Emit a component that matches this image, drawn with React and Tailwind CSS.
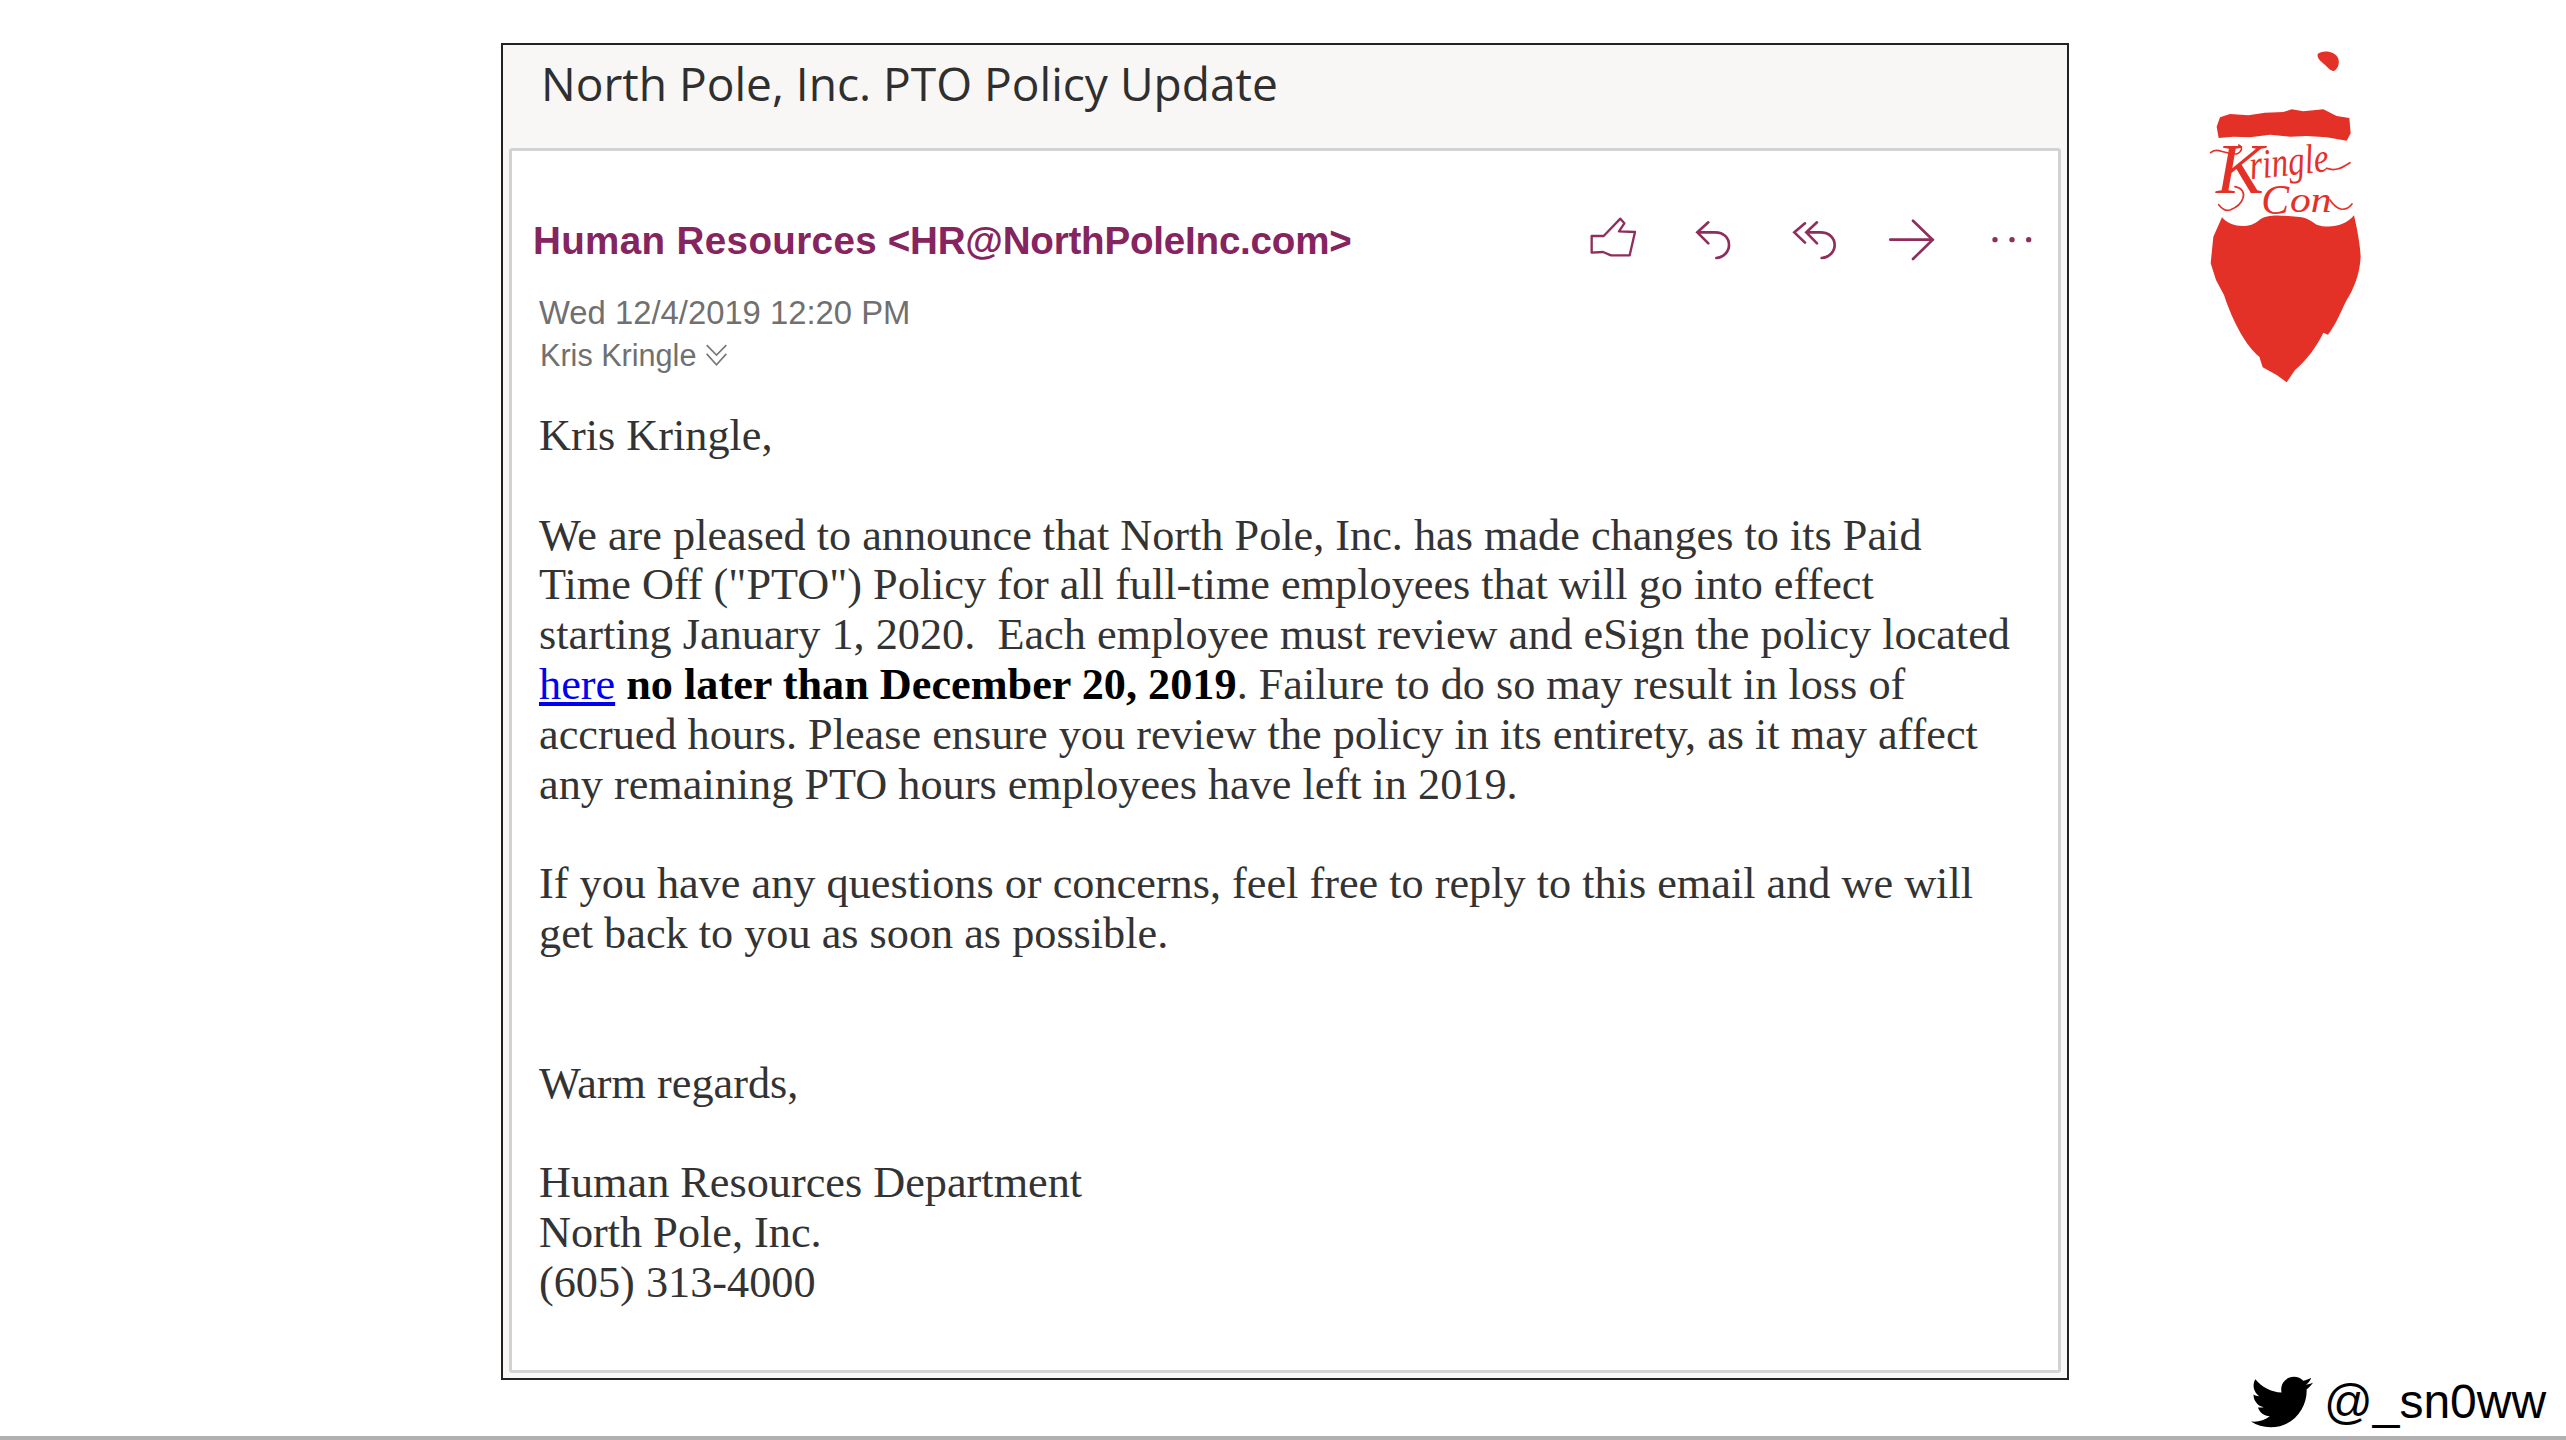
import React from "react";
import { FaTwitter } from "react-icons/fa";

const iconClass = "w-[60px] h-[50px] fill-none stroke-[#8f2d5c]";

function Thumb() {
  return (
    <svg viewBox="66 75 180 150" className={iconClass} strokeWidth="7" strokeLinejoin="round" strokeLinecap="round">
      <path d="M92 138 L128 138 L178 86 L190 100 L174 124 L222 126 L206 196 L150 196 L126 186 L92 188 Z" />
    </svg>
  );
}
function Reply() {
  return (
    <svg viewBox="366 75 180 150" className={iconClass} strokeWidth="8" strokeLinecap="round">
      <path d="M442 97 L409 127 L442 160" />
      <path d="M412 127 L462 127 C490 127 504 145 504 165 C504 185 488 202 466 204" />
    </svg>
  );
}
function ReplyAll() {
  return (
    <svg viewBox="666 75 180 150" className={iconClass} strokeWidth="8" strokeLinecap="round">
      <path d="M732 100 L700 127 L732 158" />
      <path d="M768 97 L736 127 L768 160" />
      <path d="M740 127 L778 127 C806 127 821 145 821 165 C821 185 805 202 782 204" />
    </svg>
  );
}
function Forward() {
  return (
    <svg viewBox="966 75 180 150" className={iconClass} strokeWidth="8" strokeLinecap="round">
      <path d="M988 149 L1114 149" />
      <path d="M1056 92 L1115 149 L1056 207" />
    </svg>
  );
}
function More() {
  return (
    <svg viewBox="1266 75 180 150" className="w-[60px] h-[50px] fill-[#8f2d5c]">
      <circle cx="1302" cy="149" r="8" />
      <circle cx="1353" cy="149" r="8" />
      <circle cx="1403" cy="149" r="8" />
    </svg>
  );
}

function Logo() {
  return (
    <svg viewBox="0 0 660 1110" className="w-[220px] h-[370px] shrink-0">
      <path fill="#e43128" d="M413 72 C425 60 460 62 472 80 C482 96 474 116 462 123 C452 124 444 112 432 102 C422 94 410 84 413 72 Z" />
      <path fill="#e43128" d="M120 262 L150 252 L205 256 L255 248 L310 246 L335 238 L370 244 L430 238 L470 258 L508 264 L512 310 L500 332 L440 322 L380 318 L330 320 L270 314 L210 322 L160 320 L116 324 L110 290 Z" />
      <path fill="#e43128" d="M126 562 C150 590 205 600 238 570 C262 552 300 556 350 560 C378 560 392 572 410 584 C445 596 495 590 522 556 C530 590 540 640 542 680 C540 730 520 780 500 810 C480 850 470 880 444 914 L430 908 C410 950 380 990 345 1020 L320 1057 L290 1035 L248 1012 L238 980 C200 950 160 880 132 795 L108 750 L92 700 L100 620 Z" />
      <g fill="#e43128" fontFamily="'Liberation Serif', serif" fontStyle="italic">
        <text x="108" y="488" fontSize="215">K</text>
        <text x="212" y="448" fontSize="125" textLength="238" lengthAdjust="spacingAndGlyphs" transform="rotate(-6 212 448)">ringle</text>
        <text x="244" y="552" fontSize="125">C</text>
        <text x="330" y="545" fontSize="105" textLength="125" lengthAdjust="spacingAndGlyphs">on</text>
      </g>
      <g fill="none" stroke="#e43128" strokeWidth="5" strokeLinecap="round">
        <path d="M92 368 C110 350 130 372 170 372 C185 366 190 352 176 345" />
        <path d="M440 415 C470 426 490 410 510 398" />
        <path d="M165 470 C210 480 190 525 150 540 C135 545 125 535 116 524" />
        <path d="M450 510 C470 540 495 548 516 522" />
      </g>
    </svg>
  );
}

export default function App() {
  return (
    <div className="w-[2566px] h-[1440px] bg-white flex flex-col overflow-hidden">
      <div className="flex h-[1436px] pt-[30px] pl-[501px]">
        <div className="mt-[13px] w-[1568px] h-[1337px] shrink-0 border-2 border-[#222] bg-[#f8f7f6] flex flex-col px-[6px] pb-[5px]">
          <h1 className="h-[103px] shrink-0 pl-[32px] pt-[9px] text-[46.1px] font-medium leading-[60px] text-[#2f2f2f] font-['Open_Sans',sans-serif]">
            North Pole, Inc. PTO Policy Update
          </h1>
          <div className="flex-1 border-[3px] border-[#d2d2d2] rounded-[3px] bg-white flex flex-col pl-[21px] pr-[15px]">
            <div className="flex items-center justify-between mt-[65px] h-[50px]">
              <div className="text-[38.6px] font-bold leading-[50px] text-[#85245f] font-['Liberation_Sans',sans-serif] whitespace-nowrap">
                <span className="tracking-[0.35px]">Human Resources</span>{" "}
                <span className="tracking-[-0.22px]">&lt;HR@NorthPoleInc.com&gt;</span>
              </div>
              <div className="flex gap-[40px] -mt-[3px]">
                <Thumb />
                <Reply />
                <ReplyAll />
                <Forward />
                <More />
              </div>
            </div>
            <div className="pl-[6px] mt-[25px] font-['Liberation_Sans',sans-serif] text-[#707070]">
              <div className="text-[32.8px] leading-[44px]">Wed 12/4/2019 12:20 PM</div>
              <div className="flex items-center gap-[9px] pl-[1px] text-[30.6px] leading-[40px]">
                Kris Kringle
                <svg viewBox="0 0 20 22" className="w-[23px] h-[24px] fill-none stroke-[#777]" strokeWidth="1.5">
                  <path d="M1 2 L10 11 L19 2" />
                  <path d="M1 10 L10 20 L19 10" />
                </svg>
              </div>
            </div>
            <div className="pl-[6px] mt-[36px] text-[44.25px] leading-[49.82px] text-[#333] font-['Liberation_Serif',serif] whitespace-nowrap">
              Kris Kringle,
              <br />
              <br />
              We are pleased to announce that North Pole, Inc. has made changes to its Paid
              <br />
              Time Off ("PTO") Policy for all full-time employees that will go into effect
              <br />
              starting January 1, 2020.&nbsp; Each employee must review and eSign the policy located
              <br />
              <a href="#" className="text-[#0000ee] underline">here</a>{" "}
              <b className="text-black">no later than December 20, 2019</b>. Failure to do so may result in loss of
              <br />
              accrued hours. Please ensure you review the policy in its entirety, as it may affect
              <br />
              any remaining PTO hours employees have left in 2019.
              <br />
              <br />
              If you have any questions or concerns, feel free to reply to this email and we will
              <br />
              get back to you as soon as possible.
              <br />
              <br />
              <br />
              Warm regards,
              <br />
              <br />
              Human Resources Department
              <br />
              North Pole, Inc.
              <br />
              (605) 313-4000
            </div>
          </div>
        </div>
        <div className="flex-1 flex flex-col justify-between pl-[111px] pb-[3px]">
          <Logo />
          <div className="flex items-center gap-[11px] pl-[71px] text-black font-['Liberation_Sans',sans-serif] text-[48px] leading-[52px] whitespace-nowrap">
            <FaTwitter className="w-[62px] h-[62px] shrink-0" />
            @_sn0ww
          </div>
        </div>
      </div>
      <div className="h-[4px] bg-[#b0b0b0] shrink-0" />
    </div>
  );
}
